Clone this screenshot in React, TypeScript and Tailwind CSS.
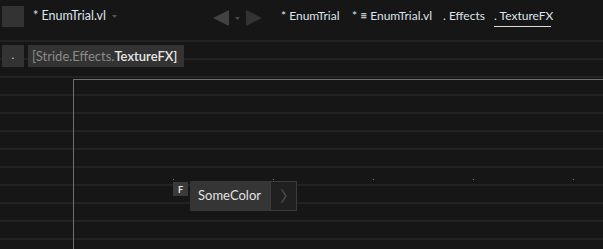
import React from "react";

const font = { fontFamily: 'Lato, "Noto Sans", sans-serif' };

function Tri({ dir, cls }: { dir: "l" | "r" | "d"; cls: string }) {
  if (dir === "l")
    return (
      <svg width="16" height="16" viewBox="0 0 16 16" className={cls}>
        <polygon points="0,8 16,0 16,16" fill="currentColor" />
      </svg>
    );
  if (dir === "r")
    return (
      <svg width="16" height="16" viewBox="0 0 16 16" className={cls}>
        <polygon points="0,0 16,8 0,16" fill="currentColor" />
      </svg>
    );
  return (
    <svg width="5" height="3" viewBox="0 0 5 3" className={cls}>
      <polygon points="0,0 5,0 2.5,3" fill="currentColor" />
    </svg>
  );
}

export default function App() {
  return (
    <div
      className="w-[603px] h-[249px] overflow-hidden bg-[#161616] text-[#dde4ec] flex flex-col"
      style={font}
    >
      {/* top bar */}
      <div className="h-[40px] shrink-0 flex items-start pt-[6px] pl-[2px]">
        <div className="w-[22px] h-[21px] bg-[#333333]" />
        <div className="ml-[9px] mt-[2px] text-[12.5px] leading-[16px] flex items-center">
          <span className="w-[79px] whitespace-nowrap">* EnumTrial.vl</span>
          <Tri dir="d" cls="mt-[1px] text-[#555555]" />
        </div>
        <div className="ml-[96px] mt-[4px] flex items-center">
          <Tri dir="l" cls="text-[#424242]" />
          <Tri dir="d" cls="ml-[6px] text-[#4a4a4a]" />
          <Tri dir="r" cls="ml-[6px] text-[#333333]" />
        </div>
        <div className="ml-[19px] mt-[2px] flex text-[12px] leading-[16px] whitespace-nowrap">
          <span className="w-[71px]">* EnumTrial</span>
          <span className="w-[91px]">* ≡ EnumTrial.vl</span>
          <span className="w-[51px]">. Effects</span>
          <span className="w-[57px] border-b border-[#dddddd] pb-[2px]">. TextureFX</span>
        </div>
      </div>

      {/* canvas */}
      <div className="relative flex-1 bg-[repeating-linear-gradient(to_bottom,#222222_0px,#222222_2px,#161616_2px,#161616_18px)]">
        <div className="absolute left-[2px] top-[5px] flex gap-[4px]">
          <div className="w-[22px] h-[22px] bg-[#333333] flex items-center justify-center text-[12px] text-[#cccccc] leading-none pb-[2px]">
            .
          </div>
          <div className="h-[22px] w-[156px] bg-[#333333] flex items-center pl-[4px] text-[13px] leading-none whitespace-nowrap">
            <span className="text-[#8a8a8a]">[Stride.Effects.</span>
            <span className="text-[#e6e6e6] font-semibold">TextureFX]</span>
          </div>
        </div>

        {/* region outline */}
        <div className="absolute left-[73px] top-[39px] w-[600px] h-[300px] border border-[#6e6e6e]" />

        {/* grid dots */}
        {[173, 273, 373, 473, 573].map((x) => (
          <div
            key={x}
            className="absolute top-[139px] w-[1px] h-[1px] bg-[#777777]"
            style={{ left: x }}
          />
        ))}

        {/* node */}
        <div className="absolute left-[173px] top-[141px] flex items-start">
          <div className="w-[15px] h-[14px] mt-[1px] bg-[#3a3a3a] flex items-center justify-center text-[9px] font-bold text-[#e6e6e6] leading-none">
            F
          </div>
          <div className="ml-[2px] h-[30px] w-[80px] bg-[#353535] flex items-center pl-[8px] text-[13px] text-[#e2e2e2] leading-none pb-[1px]">
            SomeColor
          </div>
          <div className="h-[30px] w-[27px] bg-[#202020] border border-[#3c3c3c] flex items-center justify-center text-[#4a4a4a]">
            <svg width="6" height="14" viewBox="0 0 6 14">
              <polyline points="0.5,0.5 5,7 0.5,13.5" fill="none" stroke="currentColor" strokeWidth="1.5" />
            </svg>
          </div>
        </div>
      </div>
    </div>
  );
}
